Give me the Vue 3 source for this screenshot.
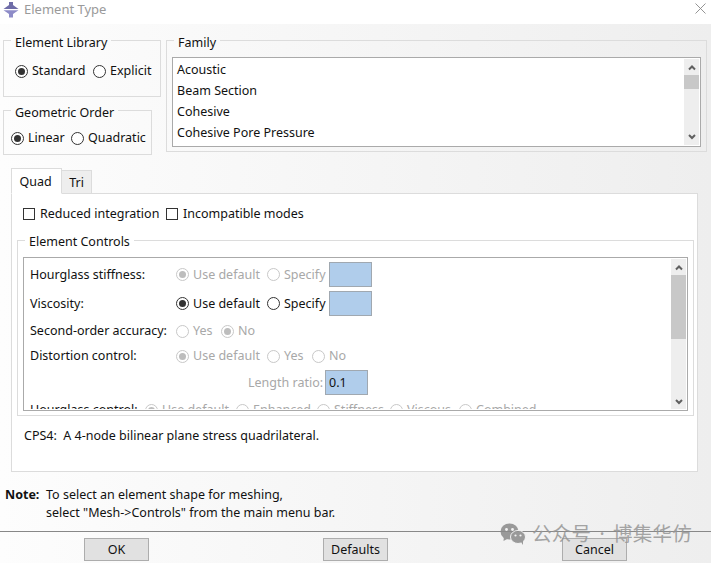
<script setup>
const chev = { up: 'M1 6.5 L4 3.5 L7 6.5', down: 'M1 2 L4 5 L7 2' }
</script>

<template>
  <div class="win">
    <header class="title">
      <svg class="logo" width="16" height="17" viewBox="0 0 16 17">
        <path d="M6 1 H10 V4 L15.5 8 H0.5 L6 4 Z" fill="#6f6da8" />
        <path d="M0.5 9.2 H15.5 L10 13 V16.5 H6 V13 Z" fill="#8e8cc8" />
      </svg>
      <span class="title-text">Element Type</span>
      <svg class="close" width="11" height="11" viewBox="0 0 11 11">
        <path d="M0.5 0.5 L10.5 10.5 M10.5 0.5 L0.5 10.5" stroke="#888" stroke-width="0.9" fill="none" />
      </svg>
    </header>

    <main class="body">
      <section class="top">
        <div class="left-col">
          <fieldset class="group lib">
            <legend>Element Library</legend>
            <div class="opts">
              <label class="opt w78"><i class="radio on"></i>Standard</label>
              <label class="opt"><i class="radio"></i>Explicit</label>
            </div>
          </fieldset>
          <fieldset class="group order">
            <legend>Geometric Order</legend>
            <div class="opts">
              <label class="opt w60"><i class="radio on"></i>Linear</label>
              <label class="opt"><i class="radio"></i>Quadratic</label>
            </div>
          </fieldset>
        </div>
        <fieldset class="group family">
          <legend>Family</legend>
          <div class="list">
            <ul>
              <li>Acoustic</li>
              <li>Beam Section</li>
              <li>Cohesive</li>
              <li>Cohesive Pore Pressure</li>
            </ul>
            <div class="sbar">
              <svg class="arrow" width="8" height="8" viewBox="0 0 8 8"><path :d="chev.up" /></svg>
              <div class="thumb thumb-list"></div>
              <svg class="arrow end" width="8" height="8" viewBox="0 0 8 8"><path :d="chev.down" /></svg>
            </div>
          </div>
        </fieldset>
      </section>

      <nav class="tabs">
        <div class="tab active">Quad</div>
        <div class="tab">Tri</div>
      </nav>

      <section class="panel">
        <div class="checks">
          <label class="opt w143"><i class="check"></i>Reduced integration</label>
          <label class="opt"><i class="check"></i>Incompatible modes</label>
        </div>

        <fieldset class="group controls">
          <legend>Element Controls</legend>
          <div class="scrollbox">
            <div class="rows">
              <div class="row h25 off">
                <span class="lbl">Hourglass stiffness:</span>
                <label class="opt w91"><i class="radio on"></i>Use default</label>
                <label class="opt w62"><i class="radio"></i>Specify</label>
                <span class="field"></span>
              </div>
              <div class="row h25">
                <span class="lbl">Viscosity:</span>
                <label class="opt w91"><i class="radio on"></i>Use default</label>
                <label class="opt w62"><i class="radio"></i>Specify</label>
                <span class="field"></span>
              </div>
              <div class="row h22 off">
                <span class="lbl">Second-order accuracy:</span>
                <label class="opt w45"><i class="radio"></i>Yes</label>
                <label class="opt"><i class="radio on"></i>No</label>
              </div>
              <div class="row h20 off">
                <span class="lbl">Distortion control:</span>
                <label class="opt w91"><i class="radio on"></i>Use default</label>
                <label class="opt w45"><i class="radio"></i>Yes</label>
                <label class="opt"><i class="radio"></i>No</label>
              </div>
              <div class="row h25 ratio">
                <span class="ratio-lbl">Length ratio:</span>
                <span class="field">0.1</span>
              </div>
              <div class="row h22 off">
                <span class="lbl short">Hourglass control:</span>
                <label class="opt w91"><i class="radio on"></i>Use default</label>
                <label class="opt w81"><i class="radio"></i>Enhanced</label>
                <label class="opt w73"><i class="radio"></i>Stiffness</label>
                <label class="opt w69"><i class="radio"></i>Viscous</label>
                <label class="opt"><i class="radio"></i>Combined</label>
              </div>
            </div>
            <div class="sbar">
              <svg class="arrow" width="8" height="8" viewBox="0 0 8 8"><path :d="chev.up" /></svg>
              <div class="thumb thumb-ctl"></div>
              <svg class="arrow end" width="8" height="8" viewBox="0 0 8 8"><path :d="chev.down" /></svg>
            </div>
          </div>
        </fieldset>

        <p class="desc">CPS4:&nbsp; A 4-node bilinear plane stress quadrilateral.</p>
      </section>

      <section class="note">
        <b>Note:</b>
        <p>To select an element shape for meshing,<br />select "Mesh-&gt;Controls" from the main menu bar.</p>
      </section>

      <footer class="foot">
        <button>OK</button>
        <button>Defaults</button>
        <button>Cancel</button>
      </footer>
    </main>

    <div class="mark">
      <svg width="26" height="22" viewBox="0 0 26 22">
        <ellipse cx="9.5" cy="8.5" rx="9" ry="8" fill="#8a8a8a" />
        <path d="M4 13 L3.5 18 L9 15 Z" fill="#8a8a8a" />
        <ellipse cx="18" cy="14" rx="7.5" ry="6.5" fill="#8a8a8a" stroke="#f3f3f3" stroke-width="1" />
        <path d="M21 19 L23 22 L23 17 Z" fill="#8a8a8a" />
        <circle cx="6.5" cy="6.5" r="1.4" fill="#f3f3f3" />
        <circle cx="12.5" cy="6.5" r="1.4" fill="#f3f3f3" />
        <circle cx="15.5" cy="12.5" r="1.1" fill="#f3f3f3" />
        <circle cx="20.5" cy="12.5" r="1.1" fill="#f3f3f3" />
      </svg>
      <span class="mark-text">公众号<em>·</em>博集华仿</span>
    </div>
  </div>
</template>

<style>
body { margin: 0; }
</style>

<style scoped>
.win {
  position: relative;
  width: 711px;
  height: 563px;
  overflow: hidden;
  display: flex;
  flex-direction: column;
  background: #fff;
  color: #111;
  font: 12.5px/18px "Noto Sans", "Noto Sans CJK SC", sans-serif;
}
.title {
  height: 24px;
  flex: none;
  display: flex;
  align-items: flex-start;
  padding: 0 5px 0 3px;
  box-sizing: border-box;
  background: #fff;
}
.logo { margin-top: 1px; }
.title-text { margin-left: 5px; font-size: 13px; color: #9a9a9a; flex: 1; }
.close { margin-top: 3px; }
.body {
  flex: 1;
  display: flex;
  flex-direction: column;
  background: linear-gradient(to right, #fdfdfd, #eeeeee);
}
.top {
  display: flex;
  gap: 5px;
  padding: 4px 4px 0 3px;
  align-items: flex-start;
}
.left-col { display: flex; flex-direction: column; gap: 1px; flex: none; }
.group {
  margin: 0;
  padding: 0;
  min-width: 0;
  border: 1px solid #dcdcdc;
  box-sizing: border-box;
}
.group legend {
  margin-left: 7px;
  padding: 6px 4px 0;
  line-height: 18px;
}
.lib { width: 158px; height: 69px; }
.lib .opts { padding: 10px 0 0 11px; }
.order { width: 149px; height: 57px; }
.order .opts { padding: 7px 0 0 7px; }
.family { flex: 1; height: 124px; }
.opts { display: flex; }
.opt { display: flex; align-items: center; flex: none; white-space: nowrap; }
.w45 { width: 45px; }
.w60 { width: 60px; }
.w62 { width: 62px; }
.w69 { width: 69px; }
.w73 { width: 73px; }
.w78 { width: 78px; }
.w81 { width: 81px; }
.w91 { width: 91px; }
.w143 { width: 143px; }
.radio {
  position: relative;
  width: 13px;
  height: 13px;
  box-sizing: border-box;
  border: 1px solid #333;
  border-radius: 50%;
  margin-right: 4px;
  flex: none;
  background: #fff;
}
.radio.on::after {
  content: "";
  position: absolute;
  inset: 2px;
  border-radius: 50%;
  background: #333;
}
.check {
  width: 12px;
  height: 12px;
  box-sizing: border-box;
  border: 1px solid #333;
  margin-right: 5px;
  flex: none;
  background: #fff;
}
.off { color: #a8a8a8; }
.off .lbl { color: #111; }
.off .radio { border-color: #c8c8c8; }
.off .radio.on::after { background: #bdbdbd; }
.list {
  display: flex;
  height: 90px;
  margin: 5px 5px 0;
  box-sizing: border-box;
  border: 1px solid #aaa;
  background: #fff;
  padding: 1px;
}
.list ul {
  flex: 1;
  list-style: none;
  margin: 0;
  padding: 0 0 0 3px;
}
.list li { line-height: 21px; }
.sbar {
  width: 15px;
  flex: none;
  display: flex;
  flex-direction: column;
  align-items: center;
  background: #eeeeee;
}
.arrow { margin-top: 4px; flex: none; }
.arrow path { fill: none; stroke: #606060; stroke-width: 2; }
.arrow.end { margin-top: auto; margin-bottom: 3px; }
.list .arrow.end { margin-bottom: 4px; }
.thumb { width: 15px; background: #c8c8c8; flex: none; }
.thumb-list { height: 14px; margin-top: 4px; }
.thumb-ctl { height: 64px; margin-top: 4px; }
.tabs {
  display: flex;
  align-items: flex-end;
  padding: 13px 0 0 11px;
  position: relative;
  z-index: 1;
  margin-bottom: -1px;
}
.tab {
  box-sizing: border-box;
  width: 30px;
  height: 24px;
  border: 1px solid #dcdcdc;
  border-left: 0;
  background: #eeeeee;
  text-align: center;
  line-height: 23px;
}
.tab.active {
  width: 51px;
  height: 26px;
  padding-right: 2px;
  border-left: 1px solid #dcdcdc;
  border-bottom-color: #fff;
  background: #fff;
  line-height: 26px;
}
.panel {
  margin-left: 11px;
  width: 687px;
  height: 279px;
  box-sizing: border-box;
  border: 1px solid #dcdcdc;
  background: #fff;
  padding: 0 3px 0 5px;
}
.checks { display: flex; height: 18px; padding: 11px 0 0 6px; }
.controls { margin-top: 6px; height: 187px; }
.controls legend { padding-top: 4px; }
.scrollbox {
  display: flex;
  height: 154px;
  margin: 6px 5px 0;
  box-sizing: border-box;
  border: 1px solid #aaa;
  background: #fff;
  padding: 1px;
  overflow: hidden;
}
.rows {
  flex: 1;
  display: flex;
  flex-direction: column;
  gap: 4px;
  padding: 3px 0 0 5px;
  min-width: 0;
  overflow: hidden;
}
.row { display: flex; align-items: center; flex: none; }
.h20 { height: 20px; }
.h22 { height: 22px; }
.h25 { height: 25px; }
.lbl { width: 146px; flex: none; }
.lbl.short { width: 115px; }
.field {
  width: 43px;
  height: 25px;
  box-sizing: border-box;
  border: 1px solid #a0a8b0;
  background: #b0cdeb;
  padding-left: 3px;
  line-height: 23px;
}
.ratio { padding-left: 218px; }
.ratio-lbl { width: 77px; color: #a8a8a8; flex: none; }
.desc { margin: 11px 0 0 7px; }
.note {
  display: flex;
  padding: 14px 0 0 5px;
  height: 59px;
  box-sizing: border-box;
}
.note b { width: 41px; flex: none; }
.note p { margin: 0; }
.foot {
  display: flex;
  justify-content: space-between;
  padding: 6px 84px 0;
  flex: 1;
  border-top: 1px solid #888;
}
button {
  width: 65px;
  height: 23px;
  padding: 0;
  box-sizing: border-box;
  background: #e1e1e1;
  border: 1px solid #adadad;
  color: #111;
  font: inherit;
}
.mark {
  position: absolute;
  left: 500px;
  top: 522px;
  display: flex;
  align-items: center;
  gap: 6px;
  color: #969696;
  font-size: 19.5px;
  line-height: 24px;
  opacity: 0.85;
  pointer-events: none;
}
.mark-text { letter-spacing: 0.2px; }
.mark-text em { font-style: normal; display: inline-block; width: 22px; text-align: center; }
</style>
